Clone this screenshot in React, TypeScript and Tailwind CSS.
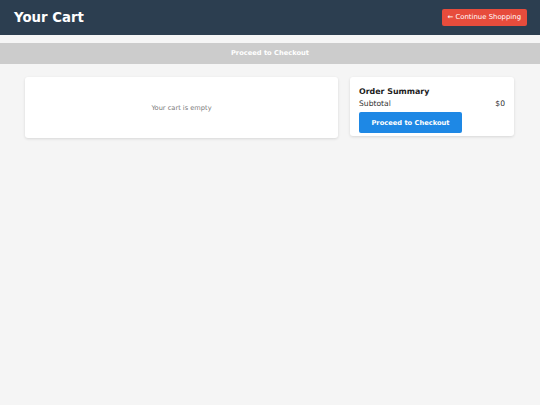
import React from 'react';

const App: React.FC = () => {
  return (
    <div className="min-h-screen bg-[#f5f5f5] font-['DejaVu_Sans',sans-serif]">
      <header className="h-[35px] bg-[#2c3e50] flex items-center justify-between pl-[14px] pr-[13px]">
        <h1 className="text-[13.3px] font-bold text-white leading-none">Your Cart</h1>
        <button className="h-[17px] px-[6px] bg-[#e74c3c] text-white text-[6.9px] rounded-[2px] leading-none">
          ← Continue Shopping
        </button>
      </header>

      <div className="mt-[8px] h-[21px] bg-[#cccccc] flex items-center justify-center">
        <span className="text-white font-bold text-[6.7px] leading-none">Proceed to Checkout</span>
      </div>

      <main className="flex items-start gap-[12px] pl-[25px] pr-[26px] mt-[13px]">
        <div className="w-[313px] h-[61px] bg-white rounded-[3px] shadow-[0_1px_3px_rgba(0,0,0,0.12)] flex items-center justify-center pt-[2px]">
          <p className="text-[#7a7a7a] text-[6.65px] leading-none">Your cart is empty</p>
        </div>

        <aside className="w-[164px] h-[59px] bg-white rounded-[3px] shadow-[0_1px_3px_rgba(0,0,0,0.12)] pl-[9px] pr-[9px] pt-[11px]">
          <h3 className="text-[7.9px] font-bold text-[#222] leading-none">Order Summary</h3>
          <div className="flex justify-between text-[7.6px] text-[#333] leading-none mt-[4px]">
            <span>Subtotal</span>
            <span>$0</span>
          </div>
          <button className="mt-[3px] w-[103px] h-[21px] bg-[#1e88e5] text-white font-bold text-[6.7px] rounded-[2px] leading-none">
            Proceed to Checkout
          </button>
        </aside>
      </main>
    </div>
  );
};

export default App;
